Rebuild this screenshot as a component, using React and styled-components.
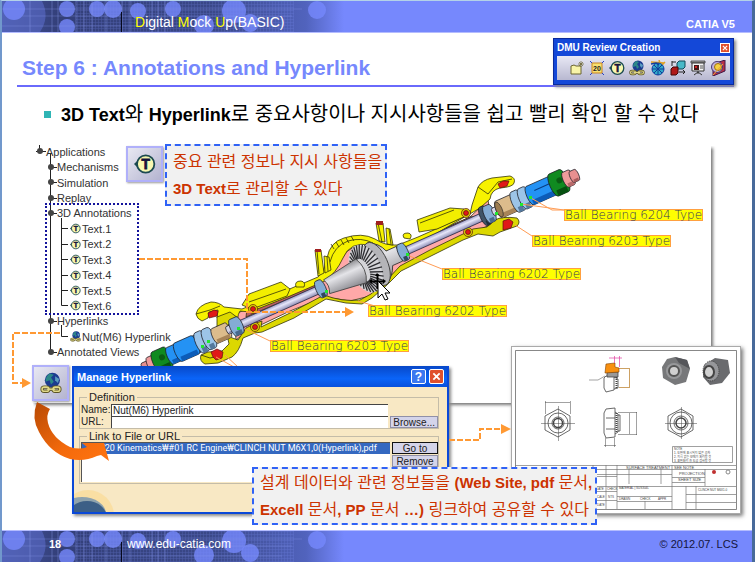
import React from 'react';
import styled, { createGlobalStyle } from 'styled-components';

const treeItems = [
  { text: 'Applications', level: 0 },
  { text: 'Mechanisms', level: 1 },
  { text: 'Simulation', level: 1 },
  { text: 'Replay', level: 1 },
  { text: '3D Annotations', level: 1 },
  { text: 'Text.1', level: 2, icon: 'text' },
  { text: 'Text.2', level: 2, icon: 'text' },
  { text: 'Text.3', level: 2, icon: 'text' },
  { text: 'Text.4', level: 2, icon: 'text' },
  { text: 'Text.5', level: 2, icon: 'text' },
  { text: 'Text.6', level: 2, icon: 'text' },
  { text: 'Hyperlinks', level: 1 },
  { text: 'Nut(M6) Hyperlink', level: 2, icon: 'link' },
  { text: 'Annotated Views', level: 1 },
];

const bearings = [
  { x: 564, y: 209, text: 'Ball Bearing 6204 Type' },
  { x: 532, y: 235, text: 'Ball Bearing 6203 Type' },
  { x: 442, y: 268, text: 'Ball Bearing 6202 Type' },
  { x: 368, y: 305, text: 'Ball Bearing 6202 Type' },
  { x: 270, y: 340, text: 'Ball Bearing 6203 Type' },
];

const tools = [
  { name: 'Annotated view', Icon: NoteIcon },
  { name: '2D view', Icon: View2dIcon },
  { name: '3D text', Icon: TextIcon },
  { name: 'Hyperlink', Icon: LinkIcon },
  { name: 'Group', Icon: MeshIcon },
  { name: 'Scene', Icon: CubesIcon },
  { name: 'Presentation', Icon: ScreenIcon },
  { name: 'Section', Icon: LensIcon },
];

function App() {
  return (
    <Slide>
      <GlobalStyle />
      <Header>
        <Dots />
        <HeaderTitle>
          <em>D</em>igital <em>M</em>ock <em>U</em>p(BASIC)
        </HeaderTitle>
        <Product>CATIA V5</Product>
      </Header>

      <Toolbar>
        <ToolbarTitle>
          DMU Review Creation
          <SmallClose type="button" aria-label="Close toolbar">
            <CrossIcon />
          </SmallClose>
        </ToolbarTitle>
        <ToolRow>
          {tools.map(({ name, Icon }) => (
            <ToolButton type="button" key={name} aria-label={name}>
              <Icon />
            </ToolButton>
          ))}
        </ToolRow>
      </Toolbar>

      <Heading>Step 6 : Annotations and Hyperlink</Heading>
      <Lead>
        <span>
          <b>3D Text</b>와 <b>Hyperlink</b>로 중요사항이나 지시사항들을 쉽고
          빨리 확인 할 수 있다
        </span>
      </Lead>

      <Canvas>
        <Viewport $x={33} $y={146} />
        <Assembly />
        {bearings.map(({ x, y, text }) => (
          <BearingLabel $x={x} $y={y} key={`${x}-${y}`}>
            {text}
          </BearingLabel>
        ))}
        <Tree $x={34} $y={144}>
          {treeItems.map(({ text, level, icon }) => (
            <TreeRow $level={level} key={text}>
              {icon === 'text' && <TextIcon />}
              {icon === 'link' && <LinkIcon />}
              {text}
            </TreeRow>
          ))}
        </Tree>
        <DottedFrame $x={45} $y={203} />
        <Sheet $x={511} $y={346}>
          <NutDrawing />
        </Sheet>
        <HyperlinkDialog />
        <Tile type="button" $x={126} $y={146} aria-label="3D text">
          <TextIcon />
        </Tile>
        <Tile type="button" $x={32} $y={365} aria-label="Hyperlink">
          <LinkIcon />
        </Tile>
        <Connectors />
        <Callout $x={165} $y={144}>
          중요 관련 정보나 지시 사항들을
          <br />
          <b>3D Text</b>로 관리할 수 있다
        </Callout>
        <Callout $x={252} $y={467} $tight>
          설계 데이터와 관련 정보들을 <b>(Web Site, pdf</b> 문서<b>,</b>
          <br />
          <b>Excell</b> 문서<b>, PP</b> 문서 <b>…)</b> 링크하여 공유할 수 있다
        </Callout>
      </Canvas>

      <Footer>
        <Dots />
        <PageNumber>18</PageNumber>
        <SiteLink href="#site">www.edu-catia.com</SiteLink>
        <Copyright>© 2012.07. LCS</Copyright>
      </Footer>
    </Slide>
  );
}

export default App;

function HyperlinkDialog() {
  return (
    <Dialog $x={72} $y={366}>
      <DialogTitle>
        Manage Hyperlink
        <TitleButton type="button" aria-label="Help">
          ?
        </TitleButton>
        <TitleButton type="button" $danger aria-label="Close">
          <CrossIcon />
        </TitleButton>
      </DialogTitle>
      <DialogBody>
        <Group>
          <legend>Definition</legend>
          <Fields>
            <label htmlFor="link-name">Name:</label>
            <input id="link-name" defaultValue="Nut(M6) Hyperlink" />
            <label htmlFor="link-url">URL:</label>
            <input id="link-url" defaultValue="" />
          </Fields>
          <DialogButton type="button">Browse...</DialogButton>
        </Group>
        <Group>
          <legend>Link to File or URL</legend>
          <FileList>
            <li>
              D:₩20 Kinematics₩#01 RC Engine₩CLINCH NUT M6X1,0(Hyperlink),pdf
            </li>
          </FileList>
          <ButtonColumn>
            <DialogButton type="button" $active>
              Go to
            </DialogButton>
            <DialogButton type="button">Remove</DialogButton>
          </ButtonColumn>
        </Group>
        <Planet viewBox="0 0 40 22">
          <circle cx="14" cy="26" r="26" fill="#fbd98e" opacity="0.6" />
          <ellipse cx="8" cy="24" rx="24" ry="17" fill="#8fa3ad" />
          <ellipse cx="13" cy="28" rx="20" ry="17" fill="#3c5f86" />
        </Planet>
      </DialogBody>
    </Dialog>
  );
}

// circles and grid lines of the header and footer bands
function Dots() {
  const circles = [
    [12, 8, 11],
    [65, 8, 8],
    [65, 26, 8],
    [95, 8, 8],
    [111, 8, 9],
    [136, 10, 8],
    [171, 8, 8],
    [202, 24, 10],
    [232, 10, 12],
    [248, 22, 9],
    [315, 9, 9],
  ];
  const verticals = [28, 50, 56, 74, 82, 90, 104, 120, 128, 150, 156, 163];
  return (
    <DotsSvg viewBox="0 0 380 31" width="380" height="31">
      <defs>
        <linearGradient id="band">
          <stop offset="0" stopColor="#46569f" />
          <stop offset="0.15" stopColor="#333f79" />
          <stop offset="0.55" stopColor="#3a4888" />
          <stop offset="0.8" stopColor="#5163bd" />
          <stop offset="0.9" stopColor="#7688fd" />
        </linearGradient>
        <pattern id="mesh" width="3" height="3" patternUnits="userSpaceOnUse">
          <path d="M0 0H3M0 0V3" stroke="#8296ff" strokeWidth="1" />
        </pattern>
      </defs>
      <path d="M0 0H380V31H0Z" fill="url(#band)" />
      <path d="M74 0H292V31H74Z" fill="url(#mesh)" opacity="0.3" />
      <path d="M0 0H40Q48 16 38 31H0Z" fill="#5a6bc8" opacity="0.6" />
      {circles.map(([cx, cy, r]) => (
        <circle key={`${cx}-${cy}`} cx={cx} cy={cy} r={r} fill="#7688fd" opacity="0.8" />
      ))}
      {verticals.map((x) => (
        <path key={x} d={`M${x} 0V31`} stroke="#8c9cf0" opacity="0.4" />
      ))}
      <path d="M0 8H300M20 15H290M0 25H280" stroke="#8c9cf0" opacity="0.3" />
      <path d="M119.500 11V31" stroke="#06081c" />
    </DotsSvg>
  );
}

function Cylinder({ u, w, h, fill, dark }) {
  return (
    <g stroke="#1c1c24" strokeWidth="0.7">
      <path
        d={`M${u} ${-h}H${u + w}A${h / 3} ${h} 0 0 1 ${u + w} ${h}H${u}A${h / 3} ${h} 0 0 1 ${u} ${-h}Z`}
        fill={fill}
      />
      <path d={`M${u} ${h / 2}H${u + w}V${h}H${u}Z`} fill={dark} stroke="none" />
    </g>
  );
}

function Assembly() {
  const teeth = Array.from({ length: 32 }, (_, i) => (i * Math.PI * 2) / 32);
  return (
    <CanvasSvg viewBox="2 130 750 400" width="750" height="400">
      <defs>
        <linearGradient id="steel" x1="0" y1="0" x2="0" y2="1">
          <stop offset="0" stopColor="#8e8e92" />
          <stop offset="0.35" stopColor="#e4e4e8" />
          <stop offset="1" stopColor="#88888e" />
        </linearGradient>
        <linearGradient id="shaft" x1="0" y1="0" x2="0" y2="1">
          <stop offset="0" stopColor="#9c9cc4" />
          <stop offset="0.4" stopColor="#e6e6fa" />
          <stop offset="1" stopColor="#8c8cb4" />
        </linearGradient>
      </defs>

      <g stroke="#33330a" strokeWidth="0.8" strokeLinejoin="round">
        {/* housing, cut open */}
        <path
          d="M234 314L285 296L319 279L333 272L346 252Q358 242 372 250L388 256L402 248L470 217L488 200L492 224L470 234L420 258L402 266L386 280L370 296L350 301L325 297L290 311L246 332L236 340Z"
          fill="#ffa8a8"
        />
        <path d="M247 309L318 280L319 286L246 317Z" fill="#b95f62" />
        <path d="M406 246L470 217L478 216L408 250Z" fill="#b95f62" />
        <path
          d="M196 314Q198 305 211 302Q219 302 224 307L242 309L247 307L318 277Q325 271 327 258Q330 242 344 238Q362 232 375 239Q385 246 398 245L418 237L470 214L472 205L478 187Q482 180 492 178L510 176Q516 178 514 183Q513 187 500 188Q491 190 490 199L480 208L420 243L400 250Q386 254 370 245Q350 241 343 258Q336 273 325 281L290 296L250 312L240 311Q236 317 239 327L228 324L217 318L218 310L209 312L208 318L202 321Q197 319 196 314Z"
          fill="#f7f200"
        />
        <path
          d="M217 317L230 312L238 318L228 325L227 336L238 340L246 328L256 323L262 321L261 327L290 313L324 295Q342 302 360 300L371 294L386 281L400 266L430 250L463 234L473 229L487 227L495 220Q502 216 517 218Q521 222 517 226L500 232L493 236L478 234L463 240L433 255L401 271L387 285L372 298L362 304L346 303L326 299L294 318L262 332L255 333L243 338Q239 352 232 357L218 363L205 364Q199 361 201 355L208 352L222 351L229 344L227 334L217 328Z"
          fill="#dcd800"
        />
        <path d="M242 305L249 294L281 282L290 289L287 296L252 309Z" fill="#f2ee00" />
        <path d="M249 302L286 289" fill="none" />
        <path d="M417 220L450 208L464 209L468 215L437 229L419 232Z" fill="#f2ee00" />
        <path d="M420 223L454 210M196 314L210 310L220 306M201 355L210 358L218 356" fill="none" />
        <path d="M478 187L488 194L498 182L512 179" fill="none" />
        <path d="M296 287Q294 281 301 281Q306 282 304 287ZM404 238Q401 233 408 233Q413 234 410 239Z" fill="#f7f200" />
        <path d="M330 262Q334 246 348 241Q361 237 373 243" fill="none" />
        {[331, 336, 341, 346, 351].map((x, i) => (
          <path key={x} d={`M${x} ${244 - i * 2}l3 5`} fill="none" />
        ))}
        <path d="M315 250H321L324 273L318 276ZM324 256L329 257L331 270L325 273Z" fill="#f7f200" />
        <path d="M376 223H383L385 242L379 241ZM386 228L390 229L393 245L387 244Z" fill="#f7f200" />
        <path d="M317 250l2 24M378 223l4 19M327 257l1 14M389 229l2 15" fill="none" />
      </g>
      <path d="M315 249h6v3h-6ZM376 221h7v4h-7Z" fill="#a02020" />
      <g stroke="#5c1010" strokeWidth="0.7">
        <circle cx="253" cy="309" r="4.500" fill="#d8d400" />
        <circle cx="255" cy="327" r="4.500" fill="#d8d400" />
        <circle cx="466" cy="213" r="4.500" fill="#d8d400" />
        <circle cx="468" cy="232" r="4.500" fill="#d8d400" />
        <circle cx="253" cy="309" r="2.500" fill="#e01818" />
        <circle cx="255" cy="327" r="2.500" fill="#e01818" />
        <circle cx="466" cy="213" r="2.500" fill="#e01818" />
        <circle cx="468" cy="232" r="2.500" fill="#e01818" />
        <path d="M208 313l6-3 4 1-1 5-8 2Z" fill="#e01818" />
        <path d="M211 352l6-3 6 3-1 6-6 2-3-3Z" fill="#e01818" />
        <path d="M498 184l5-3 6 0-2 5-7 2Z" fill="#e01818" />
        <path d="M503 221l6-2 4 3-2 6-8 2Z" fill="#e01818" />
      </g>

      <g transform="translate(235 327) rotate(-24)">
        <Cylinder u={-100} w={8} h={5} fill="#e89090" dark="#a85c5c" />
        <Cylinder u={-93} w={8} h={8} fill="#f09c9c" dark="#b86a6a" />
        <Cylinder u={-86} w={12} h={11} fill="#108a20" dark="#065010" />
        <circle cx="-79" cy="-2" r="3" fill="#0a5c14" />
        <Cylinder u={-71} w={30} h={9} fill="#2492f4" dark="#0c5cb8" />
        <Cylinder u={-62} w={18} h={10} fill="#2492f4" dark="#0c5cb8" />
        <Cylinder u={-39} w={5} h={11} fill="#9cc4e8" dark="#54789c" />
        <Cylinder u={-31} w={5} h={11} fill="#9cc4e8" dark="#54789c" />
        <Cylinder u={-22} w={14} h={8} fill="#dcbc8c" dark="#a88458" />
        <Cylinder u={-8} w={7} h={4} fill="#d4d4e8" dark="#8484a8" />
        <path d="M2 -4H96V4H2Z" fill="url(#shaft)" stroke="#30304c" strokeWidth="0.8" />
        <Cylinder u={-2} w={7} h={9} fill="#84acd4" dark="#48688c" />
        <Cylinder u={92} w={4} h={9} fill="#84acd4" dark="#30485c" />
        <path
          d="M155 -23Q166 -18 169 -8L180 -8V8L169 8Q165 18 155 23Z"
          fill="url(#steel)"
          stroke="#333"
          strokeWidth="0.8"
        />
        <ellipse cx="155" cy="0" rx="11" ry="23" fill="#b4b4b8" stroke="#333" strokeWidth="0.8" />
        <ellipse cx="143" cy="0" rx="15" ry="25" fill="#d4d4d8" />
        {teeth.map((a) => (
          <path
            key={a}
            d={`M${140 + Math.cos(a) * 6} ${Math.sin(a) * 12}L${144 + Math.cos(a) * 15} ${Math.sin(a) * 25}`}
            stroke="#2c2c30"
            strokeWidth="1.300"
          />
        ))}
        <path
          d="M100 -7L138 -13Q145 0 138 13L100 8Q104 0 100 -7Z"
          fill="url(#steel)"
          stroke="#444"
          strokeWidth="0.8"
        />
        <path d="M187 -4H276V4H187Z" fill="url(#shaft)" stroke="#30304c" strokeWidth="0.8" />
        <Cylinder u={182} w={4} h={9} fill="#84acd4" dark="#30485c" />
        <Cylinder u={272} w={3} h={10} fill="#405468" dark="#20303c" />
        <Cylinder u={276} w={5} h={9} fill="#84acd4" dark="#48688c" />
        <Cylinder u={283} w={8} h={4} fill="#d4d4e8" dark="#8484a8" />
        <Cylinder u={289} w={18} h={9} fill="#dcbc8c" dark="#a88458" />
        <ellipse cx="289" cy="0" rx="3" ry="8" fill="#9c7c50" stroke="#222" strokeWidth="0.6" />
        <Cylinder u={307} w={5} h={11} fill="#9cc4e8" dark="#54789c" />
        <Cylinder u={315} w={5} h={11} fill="#9cc4e8" dark="#54789c" />
        <Cylinder u={323} w={26} h={10} fill="#2492f4" dark="#0c5cb8" />
        <path d="M329 -3H346" stroke="#083c80" />
        <Cylinder u={349} w={11} h={12} fill="#108a20" dark="#065010" />
        <circle cx="356" cy="-2" r="3" fill="#0a5c14" />
        <Cylinder u={362} w={6} h={8} fill="#f09c9c" dark="#b86a6a" />
        <Cylinder u={369} w={5} h={6} fill="#e89090" dark="#a85c5c" />
      </g>

      <path
        d="M531 198L552 210H564M521 204L564 210M515 225L532 236M407 255L442 269M358 301L375 306M245 329L270 341M225 355L238 367M216 357L234 367"
        fill="none"
        stroke="#ff9c54"
      />
      <path
        d="M529 196h3v3h-3ZM520 203h3v3h-3ZM495 212h3v3h-3ZM406 253h3v3h-3ZM325 290h3v3h-3ZM237 327h3v3h-3ZM207 340h3v3h-3ZM201 345h3v3h-3Z"
        fill="#20e830"
      />

      {/* branches of the specification tree */}
      <g fill="none" stroke="#222">
        <path d="M39.500 145V151M36 151.500H46M50.500 153V352M50 167.500H57M50 182.500H57M50 198.500H57M50 213.500H57M50 321.500H57M50 352.500H57" />
        <path d="M61.500 218V305.500H68M61 228.500H68M61 244.500H68M61 259.500H68M61 275.500H68M61 290.500H68M61.500 325V336.500H68" />
      </g>
      {[167, 182, 198, 213, 321, 352].map((y) => (
        <circle key={y} cx="51" cy={y} r="3" fill="#444" />
      ))}
      <circle cx="40" cy="151" r="3" fill="#444" />
    </CanvasSvg>
  );
}

// dashed arrows and the mouse pointer, drawn over the panels
function Connectors() {
  return (
    <CanvasSvg viewBox="2 130 750 400" width="750" height="400">
      <defs>
        <linearGradient id="swoosh" x1="0" y1="0" x2="1" y2="1">
          <stop offset="0" stopColor="#b84a04" />
          <stop offset="0.6" stopColor="#f46a0c" />
          <stop offset="1" stopColor="#ff7410" />
        </linearGradient>
      </defs>
      <g fill="none" stroke="#ff9933" strokeWidth="2" strokeDasharray="6 2">
        <path d="M139 259H247V312H345" />
        <path d="M60 333H13V383H22" />
        <path d="M449 440H480V429H501" />
      </g>
      <path
        d="M345 307L354 312L345 317ZM22 378L31 383L22 388ZM501 424L511 429L501 434Z"
        fill="#ff9933"
      />
      <path
        d="M37 402Q31 418 39 432Q50 453 70 459Q84 462 97 456L101 455L109 461L104 443L82 443L87 447Q80 450 70 447Q52 438 48 423Q46 415 50 409Z"
        fill="url(#swoosh)"
      />
      <g stroke="#000" strokeWidth="1" fill="#fff">
        <path d="M370 281.500H384M377.500 274V289" strokeWidth="2" />
        <path d="M378 281V298L382 294L385 300L388 299L385 293H390Z" />
      </g>
      <path d="M369 281l3-2v5ZM377 273l-2 3h5ZM386 281l-3-2v5Z" />
    </CanvasSvg>
  );
}

function NutDrawing() {
  return (
    <svg viewBox="512 346 228 166" width="228" height="166">
      <g fill="none" stroke="#777" strokeWidth="0.7">
        <path d="M515.500 349.500H736.500V508.500H515.500Z" stroke="#555" />
        <path d="M672.500 445.500H732.500V461.500H672.500Z" />
        <path d="M515 464.500H736M515 468.500H736M593 473.500H672M515 475.500H617M515 485.500H736M593 490.500H617M593 499.500H617M515 499.500H593M593 464V508M606 464V508M617 464V508M629 468V483M661 468V483M672 464V508M705 468V485M645 500V508M696 485V508M672 476.500H705M672 481.500H705M686 485V508M686 493.500H736M686 501.500H736M617 495.500H672M617 500.500H672" />
      </g>
      <g fill="none" stroke="#444" strokeWidth="0.8">
        <path d="M558 408L570 415V429L558 436L545 429V415Z" />
        <circle cx="558" cy="422" r="10" />
        <circle cx="558" cy="422" r="6" />
        <circle cx="558" cy="422" r="4.500" strokeWidth="1.500" />
        <path d="M541 422.500H575M558.500 405V440M545.500 400V413M570.500 400V413M545 401.500H570" strokeWidth="0.5" />
        <path d="M681 408L693 415V429L681 436L668 429V415Z" />
        <circle cx="681" cy="422" r="11" />
        <circle cx="681" cy="422" r="7" />
        <circle cx="681" cy="422" r="5" strokeWidth="1.500" />
        <path d="M665 422.500H697M681.500 406V438" strokeWidth="0.5" />
        <path d="M606 408L615 407V436L606 437L604 432V412ZM606 417H615M606 428H615M615 411L618 413V431L615 433M618 414H620V430H618" />
        <path d="M616.500 412V432" strokeWidth="2" strokeDasharray="1 1" />
        <path d="M618 411.500H637M618 433.500H637M629.500 412V433M636.500 411V434M605.500 437V446M614.500 437V446M604 444.500H616" strokeWidth="0.5" />
        <path d="M606 375H614V389L606 391L604 387V377ZM614 376L618 378V387L614 388" />
        <path d="M607 371H618V376H607Z" fill="#999" />
        <path d="M616.500 376V388" strokeWidth="2" strokeDasharray="1 1" />
        <path d="M589 379H598L605 375" strokeWidth="0.5" />
      </g>
      <path d="M606 363L615 362V366L619 367V371L605 372Z" fill="#f89010" stroke="#804000" strokeWidth="0.6" />
      <path d="M609 357H622M614.500 355V362M619.500 355V366" stroke="#e040a0" strokeWidth="0.7" />
      <path d="M619 367.500H630M619 386.500H630M629.500 368V386" stroke="#b87820" strokeWidth="0.7" />

      <path d="M675 356L687 359L690 368L686 381L675 384L663 377L662 366L667 358Z" fill="#77787a" />
      <path d="M675 356L687 359L690 368L679 362Z" fill="#55565a" />
      <ellipse cx="674" cy="370" rx="8" ry="8" fill="#97989a" />
      <ellipse cx="674" cy="370" rx="5" ry="5" fill="#d0d0d0" stroke="#555" strokeWidth="2" />
      <path d="M715 357L728 359L730 372L722 382L710 384L703 376L704 364Z" fill="#6a6b6e" />
      <ellipse cx="711" cy="370" rx="8" ry="10" fill="#96979a" stroke="#444" strokeDasharray="1 1" />
      <ellipse cx="709" cy="371" rx="5" ry="6" fill="#d0d0d0" stroke="#444" strokeWidth="2" />

      <g fill="#444" fontSize="4">
        <text x="626" y="468">SURFACE TREATMENT</text>
        <text x="674" y="468">SEE NOTE</text>
        <text x="679" y="474">PROJECTION</text>
        <text x="678" y="480">SHEET SIZE</text>
      </g>
      <g fill="#444" fontSize="3">
        <text x="674" y="449">NOTE</text>
        <text x="674" y="453">1. 도면에 표시되지 않은 공차</text>
        <text x="674" y="457">2. 지시 없는 모떼기 처리할 것</text>
        <text x="674" y="461">3. 표면처리 후 도금 검사할 것</text>
        <text x="698" y="490">CLINCH NUT M6X1.0</text>
        <text x="596" y="489">DATE</text>
        <text x="607" y="489">CHECK</text>
        <text x="619" y="488">MATERIAL | SUS304L</text>
        <text x="595" y="497">SCALE</text>
        <text x="608" y="497">NTS</text>
        <text x="597" y="505">DATE</text>
        <text x="619" y="499">DRAWN</text>
        <text x="640" y="499">CHECK</text>
        <text x="658" y="499">APPR</text>
      </g>
      <circle cx="714" cy="471" r="2" fill="#c03030" />
      <circle cx="728" cy="471" r="2" fill="none" stroke="#888" />
    </svg>
  );
}

function NoteIcon() {
  return (
    <svg viewBox="0 0 16 16">
      <path d="M2 6L5 5L7 6H12V14H2Z" fill="#f8f4a8" stroke="#6a6430" />
      <path d="M12 1V7M9 4H15M10 2L14 6M14 2L10 6" stroke="#6a6430" strokeWidth="0.7" />
    </svg>
  );
}

function View2dIcon() {
  return (
    <svg viewBox="0 0 16 16">
      <path d="M1 1L4 4M15 1L12 4M1 15L4 12M15 15L12 12" stroke="#2440c8" />
      <path d="M3 3H13V13H3Z" fill="#f8e070" stroke="#c88420" />
      <text x="8" y="11" fontSize="7" fontWeight="700" textAnchor="middle" fill="#222">
        20
      </text>
    </svg>
  );
}

function TextIcon() {
  return (
    <svg viewBox="0 0 16 16">
      <path d="M0 8L3 5V11Z" fill="#1c4a50" />
      <circle cx="8.500" cy="8" r="6.300" fill="#f8f8b0" stroke="#1c4a50" strokeWidth="1.300" />
      <text
        x="8.500"
        y="11.500"
        fontFamily="Liberation Sans, sans-serif"
        fontSize="10"
        fontWeight="700"
        textAnchor="middle"
        fill="#14143c"
        stroke="#14143c"
        strokeWidth="0.6"
      >
        T
      </text>
    </svg>
  );
}

function LinkIcon() {
  return (
    <svg viewBox="0 0 16 16">
      <circle cx="9" cy="6" r="5.500" fill="#1c3c90" />
      <path d="M7 1Q4 3 4 7L7 6L8 9L10 7L8 4L10 2Z" fill="#2c8888" />
      <path d="M11 3L14 5L13 8L11 6Z" fill="#5c9cc0" />
      <g fill="none" stroke="#5c5424" strokeWidth="2.400">
        <rect x="1.500" y="11" width="5" height="3" rx="1.500" />
        <rect x="9.500" y="11" width="5" height="3" rx="1.500" />
        <path d="M5 12.500H11" />
      </g>
      <g fill="none" stroke="#e0d888" strokeWidth="1.100">
        <rect x="1.500" y="11" width="5" height="3" rx="1.500" />
        <rect x="9.500" y="11" width="5" height="3" rx="1.500" />
        <path d="M5 12.500H11" />
      </g>
    </svg>
  );
}

function MeshIcon() {
  return (
    <svg viewBox="0 0 16 16">
      <path d="M1 2L14 3M9 0L11 6L15 2" stroke="#e0a020" strokeWidth="1.500" fill="none" />
      <circle cx="8" cy="9" r="6" fill="#30a8c8" stroke="#1040a0" />
      <path d="M2 9H14M4 5L12 13M12 5L4 13M8 3V15" stroke="#103c98" />
      <path d="M1 4L6 3L9 5" stroke="#1040a0" strokeWidth="1.500" fill="none" />
    </svg>
  );
}

function CubesIcon() {
  return (
    <svg viewBox="0 0 16 16">
      <path d="M7 3L9 1H15V7L13 9H7Z" fill="#48b8c8" stroke="#104858" />
      <path d="M1 9L3 7H8V13L6 15H1Z" fill="#b01818" stroke="#400808" />
      <path d="M2 1V6M2 2H6M9 12H15M13 10L15 12L13 14" stroke="#222" fill="none" />
    </svg>
  );
}

function ScreenIcon() {
  return (
    <svg viewBox="0 0 16 16">
      <path d="M1 1H15V3H1Z" fill="#aaa" stroke="#333" strokeWidth="0.800" />
      <path d="M2 3H14V11H2Z" fill="#f4f4f4" stroke="#333" />
      <path d="M4 5H9V10H4Z" fill="#401818" />
      <path d="M5 6H7V8H5Z" fill="#d02020" />
      <path d="M10 6H13M10 8H13" stroke="#555" />
      <path d="M8 11V14M4 15L8 12L12 15" stroke="#333" fill="none" />
    </svg>
  );
}

function LensIcon() {
  return (
    <svg viewBox="0 0 16 16">
      <path d="M3 4L15 0V11L3 16Z" fill="#b83048" stroke="#401848" />
      <circle cx="7" cy="7" r="5.500" fill="#c0b0d8" stroke="#483878" />
      <circle cx="8" cy="7" r="3.500" fill="#f4d040" stroke="#a07010" />
      <path d="M3 15L13 4" stroke="#f0a030" />
    </svg>
  );
}

function CrossIcon() {
  return (
    <svg viewBox="0 0 10 10">
      <path d="M1.500 1.500L8.500 8.500M8.500 1.500L1.500 8.500" stroke="#fff" strokeWidth="2" />
    </svg>
  );
}

const GlobalStyle = createGlobalStyle`
  * {
    box-sizing: border-box;
  }
  body {
    margin: 0;
    font-family: 'Liberation Sans', 'Noto Sans CJK KR', sans-serif;
  }
  button, input {
    font-family: inherit;
  }
`;

const Slide = styled.main`
  position: relative;
  display: flex;
  flex-direction: column;
  min-height: 100vh;
  border-top: 1px solid #b4d2e8;
  border-left: 2px solid #7198cc;
  border-right: 3px solid #486a9a;
  background-color: #fff;
`;

const Band = styled.div`
  position: relative;
  display: flex;
  align-items: center;
  height: 32px;
  background-color: #7688fd;
  color: #fff;
`;
const Header = styled(Band).attrs({ as: 'header' })`
  border-bottom: 1px solid #b4bcff;
  padding: 10px 17px 0 133px;
`;
const Footer = styled(Band).attrs({ as: 'footer' })`
  border-top: 1px solid #b4bcff;
  padding: 0 14px 6px 47px;
`;
const DotsSvg = styled.svg`
  position: absolute;
  left: 0;
  top: 0;
`;
const HeaderTitle = styled.span`
  position: relative;
  font-size: 14px;
  em {
    color: #ff0;
    font-style: normal;
  }
`;
const Product = styled.b`
  margin-left: auto;
  padding-top: 4px;
  font-size: 11px;
`;
const PageNumber = styled.b`
  position: relative;
  width: 78px;
  font-size: 11px;
`;
const SiteLink = styled.a`
  position: relative;
  color: #fff;
  font-size: 12px;
  text-decoration: none;
`;
const Copyright = styled.span`
  margin-left: auto;
  font-size: 11px;
  color: #14143c;
`;

const Heading = styled.h1`
  margin: 22px 18px 0 15px;
  padding: 0 5px 4px;
  border-bottom: 2px solid #6a6afc;
  color: #7688fd;
  font-size: 21px;
  line-height: 26px;
`;
const Lead = styled.p`
  display: flex;
  align-items: center;
  height: 31px;
  margin: 12px 0 0 42px;
  font-size: 20px;
  line-height: 30px;
  white-space: nowrap;
  &::before {
    content: '';
    width: 7px;
    height: 7px;
    margin-right: 10px;
    background-color: #2fb5b5;
  }
  b {
    font-size: 18px;
  }
`;

const Toolbar = styled.section`
  position: absolute;
  right: 18px;
  top: 37px;
  z-index: 1;
  width: 181px;
  padding: 0 3px 4px;
  border: 1px solid #0a2a9c;
  background-color: #1448d8;
  box-shadow: 2px 2px 3px #888;
`;
const ToolbarTitle = styled.div`
  display: flex;
  align-items: center;
  justify-content: space-between;
  height: 17px;
  color: #fff;
  font-size: 10px;
  font-weight: 700;
`;
const SmallClose = styled.button`
  display: flex;
  width: 10px;
  height: 10px;
  padding: 1px;
  border: 1px solid #fff;
  background-color: #e0502c;
`;
const ToolRow = styled.div`
  display: flex;
  justify-content: space-between;
  height: 24px;
  padding: 0 3px 0 11px;
  background: linear-gradient(#e8e8f4, #b8b8d0);
`;
const ToolButton = styled.button`
  display: flex;
  align-items: center;
  justify-content: center;
  width: 18px;
  padding: 0;
  border: none;
  background: none;
  svg {
    width: 16px;
    height: 16px;
  }
`;

const Canvas = styled.div`
  position: relative;
  flex: 1;
  min-height: 400px;
`;
const CanvasSvg = styled.svg`
  position: absolute;
  left: 0;
  top: 0;
  pointer-events: none;
`;
// x and y are slide coordinates, the canvas starts at 2, 130
const Pin = styled.div`
  position: absolute;
  left: ${({ $x }) => $x - 2}px;
  top: ${({ $y }) => $y - 130}px;
`;
const Viewport = styled(Pin)`
  width: 678px;
  height: 257px;
  background-color: #fff;
  box-shadow: 2px 2px 3px #777;
  clip-path: inset(0 -6px -6px 0);
`;
const BearingLabel = styled(Pin)`
  border: 1px solid #ffa040;
  background-color: #ff0;
  color: #34345c;
  font-family: 'DejaVu Sans', sans-serif;
  font-size: 12px;
  font-weight: 200;
  line-height: 10px;
  white-space: nowrap;
`;
const Tree = styled(Pin)`
  display: grid;
  grid-auto-rows: 1fr;
  height: 216px;
`;
const TreeRow = styled.div`
  display: flex;
  align-items: center;
  gap: 1px;
  padding-left: ${({ $level }) => [12, 23, 36][$level]}px;
  color: #333;
  font-size: 11px;
  white-space: nowrap;
  svg {
    width: 11px;
    height: 11px;
  }
`;
const DottedFrame = styled(Pin)`
  width: 94px;
  height: 112px;
  border: 2px dotted #14149c;
`;
const Sheet = styled(Pin)`
  display: flex;
  border: 1px solid #aaa;
  background-color: #fff;
  box-shadow: 2px 2px 4px #777;
`;
const Tile = styled(Pin).attrs({ as: 'button' })`
  display: flex;
  align-items: center;
  justify-content: center;
  width: 37px;
  height: 36px;
  padding: 0;
  border: 2px solid #b0b0fa;
  background: linear-gradient(135deg, #e8e8f2, #b4b4d0);
  box-shadow: 1px 1px 2px #999;
  svg {
    width: 22px;
    height: 22px;
  }
`;
const Callout = styled(Pin)`
  padding: ${({ $tight }) => ($tight ? '0' : '2px')} 3px
    ${({ $tight }) => ($tight ? '0' : '2px')} 6px;
  border: 2px dashed #2f62f6;
  background-color: #f1f1f1;
  color: #cc3300;
  font-size: 16px;
  line-height: 27px;
  white-space: nowrap;
  b {
    font-size: 15px;
    line-height: 20px;
  }
`;

const Dialog = styled(Pin).attrs({ as: 'section' })`
  width: 377px;
  height: 148px;
  border: 2px solid #0a48d8;
  border-top: none;
  background-color: #f8e8c4;
  box-shadow: 2px 2px 3px #888;
`;
const DialogTitle = styled.div`
  display: flex;
  align-items: center;
  gap: 3px;
  height: 21px;
  padding: 0 3px;
  background: linear-gradient(#0848c8, #0a64f8 60%, #0850dc);
  color: #fff;
  font-size: 11px;
  font-weight: 700;
`;
const TitleButton = styled.button`
  display: flex;
  align-items: center;
  justify-content: center;
  width: 15px;
  height: 15px;
  margin-left: ${({ $danger }) => ($danger ? '0' : 'auto')};
  padding: 2px;
  border: 1px solid #fff;
  border-radius: 2px;
  background-color: ${({ $danger }) => ($danger ? '#e0502c' : '#3c78f0')};
  color: #fff;
  font-size: 12px;
  font-weight: 700;
`;
const DialogBody = styled.div`
  position: relative;
  display: grid;
  gap: 1px;
  height: 125px;
  padding: 4px 8px 28px 5px;
  color: #222;
  font-size: 11px;
`;
const Group = styled.fieldset`
  display: flex;
  align-items: flex-end;
  gap: 2px;
  min-width: 0;
  margin: 0;
  padding: 0 0 0 1px;
  border: 1px solid #c4bca8;
  legend {
    margin-left: 6px;
    padding: 0 2px;
    line-height: 12px;
  }
`;
const Fields = styled.div`
  display: grid;
  flex: 1;
  grid-template-columns: 30px 1fr;
  line-height: 12px;
  label {
    font-size: 10px;
  }
  input {
    min-width: 0;
    height: 12px;
    padding: 0 1px;
    border: none;
    border-top: 1px solid #444;
    border-left: 1px solid #444;
    background-color: #fff;
    color: #222;
    font-size: 10px;
  }
`;
const FileList = styled.ul`
  flex: 1;
  align-self: stretch;
  min-width: 0;
  height: 40px;
  margin: 0;
  padding: 0;
  border-top: 1px solid #555;
  border-left: 1px solid #555;
  background-color: #fff;
  list-style: none;
  li {
    padding-left: 8px;
    background-color: #3468c0;
    color: #fff;
    font-family: Roboto, sans-serif;
    font-size: 9px;
    line-height: 11px;
    white-space: nowrap;
  }
`;
const ButtonColumn = styled.div`
  display: grid;
  gap: 1px;
  align-self: flex-start;
`;
const DialogButton = styled.button`
  min-width: 46px;
  height: 12px;
  padding: 0 2px;
  border: 1px solid ${({ $active }) => ($active ? '#111' : '#9090a8')};
  background-color: #d4d4ea;
  color: #222;
  font-size: 10px;
  line-height: 9px;
`;
const Planet = styled.svg`
  position: absolute;
  left: 0;
  bottom: 0;
  width: 40px;
  height: 22px;
`;
